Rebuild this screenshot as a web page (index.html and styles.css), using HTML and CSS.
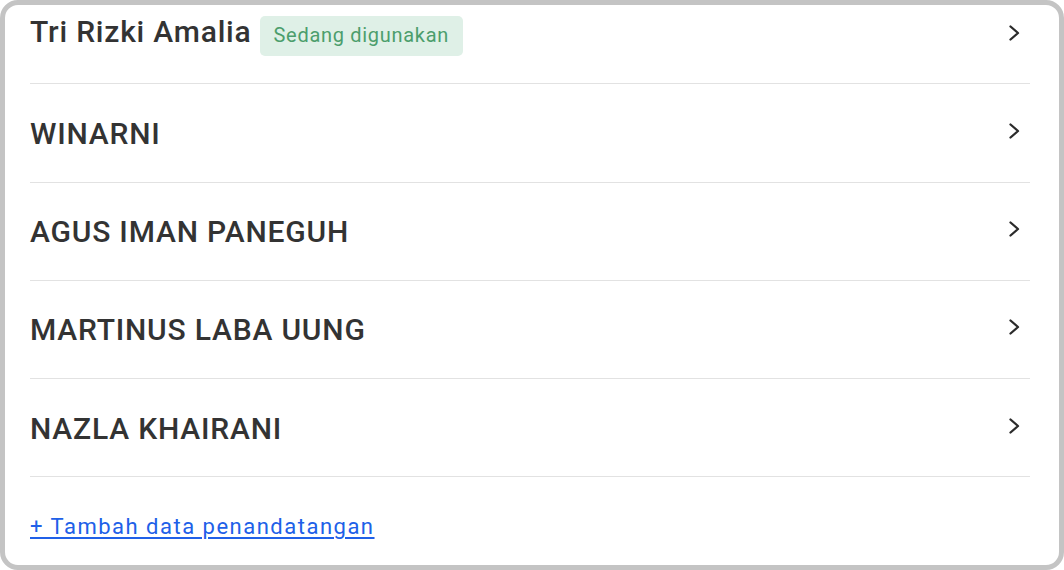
FILE: index.html
```html
<!DOCTYPE html>
<html lang="id">
<head>
<meta charset="utf-8">
<title>Data penandatangan</title>
<link rel="stylesheet" href="styles.css">
</head>
<body>
<div class="card">
  <ul class="list">
    <li class="row">
      <div class="name-group">
        <span class="name">Tri Rizki Amalia</span>
        <span class="badge">Sedang digunakan</span>
      </div>
      <svg class="chev" viewBox="0 0 20 20" width="20" height="20"><polyline points="6.5,3.5 14,10 6.5,16.5"/></svg>
    </li>
    <li class="row">
      <div class="name-group"><span class="name">WINARNI</span></div>
      <svg class="chev" viewBox="0 0 20 20" width="20" height="20"><polyline points="6.5,3.5 14,10 6.5,16.5"/></svg>
    </li>
    <li class="row">
      <div class="name-group"><span class="name">AGUS IMAN PANEGUH</span></div>
      <svg class="chev" viewBox="0 0 20 20" width="20" height="20"><polyline points="6.5,3.5 14,10 6.5,16.5"/></svg>
    </li>
    <li class="row">
      <div class="name-group"><span class="name">MARTINUS LABA UUNG</span></div>
      <svg class="chev" viewBox="0 0 20 20" width="20" height="20"><polyline points="6.5,3.5 14,10 6.5,16.5"/></svg>
    </li>
    <li class="row">
      <div class="name-group"><span class="name">NAZLA KHAIRANI</span></div>
      <svg class="chev" viewBox="0 0 20 20" width="20" height="20"><polyline points="6.5,3.5 14,10 6.5,16.5"/></svg>
    </li>
  </ul>
  <a class="add-link" href="#">+ Tambah data penandatangan</a>
</div>
</body>
</html>
```
FILE: styles.css
```css
html, body {
  margin: 0;
  padding: 0;
  background: #ffffff;
}
body {
  font-family: Roboto, "Liberation Sans", Arial, sans-serif;
  color: #333333;
}
.card {
  box-sizing: border-box;
  width: 1064px;
  height: 570px;
  border: 5px solid #c4c4c4;
  border-radius: 18px;
  background: #ffffff;
  overflow: hidden;
  padding: 0 29px 0 25px;
}
.list {
  list-style: none;
  margin: -19px 0 0 0;
  padding: 0;
}
.row {
  height: 97.25px;
  border-bottom: 1px solid #e2e2e2;
  display: flex;
  align-items: center;
  justify-content: space-between;
}
.name-group {
  display: flex;
  align-items: baseline;
  gap: 8px;
  padding-top: 1px;
}
.name {
  font-size: 30px;
  font-weight: 500;
  letter-spacing: 0.8px;
  color: #333333;
}
.badge {
  font-size: 20px;
  letter-spacing: 0.7px;
  color: #4c9e6c;
  background: #dff0e7;
  border-radius: 5px;
  padding: 8px 14px 9px 14px;
  line-height: 23px;
}
.chev {
  fill: none;
  stroke: #2b2b2b;
  stroke-width: 2.3;
  stroke-linecap: round;
  stroke-linejoin: round;
  margin-right: 6px;
  margin-bottom: 4px;
}
.add-link {
  display: inline-block;
  margin-top: 37px;
  font-size: 22px;
  letter-spacing: 1.5px;
  color: #2060e8;
  text-decoration: underline;
  text-underline-offset: 3px;
}
```
